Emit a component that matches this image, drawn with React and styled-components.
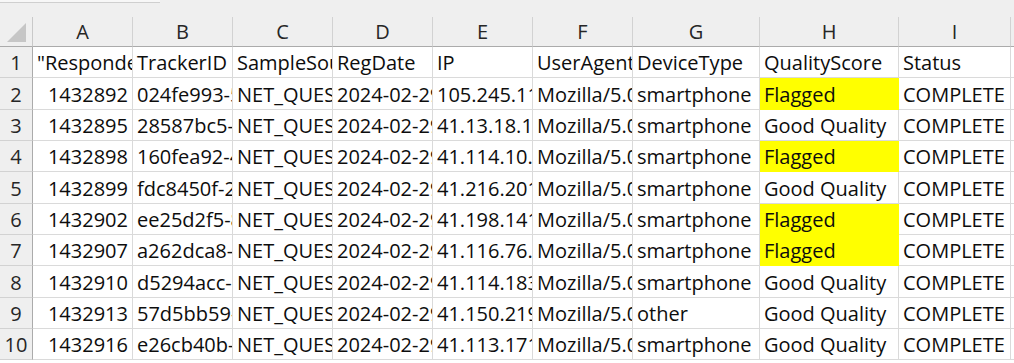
import React from "react";
import styled, { createGlobalStyle } from "styled-components";

const GlobalStyle = createGlobalStyle`
  html, body {
    margin: 0;
    padding: 0;
    background: #ffffff;
  }
`;

const COLS = [100, 100, 100, 100, 100, 100, 127, 139, 112];
const LETTERS = ["A", "B", "C", "D", "E", "F", "G", "H", "I", ""];

const headers = [
  '"RespondentID"',
  "TrackerID",
  "SampleSource",
  "RegDate",
  "IP",
  "UserAgent",
  "DeviceType",
  "QualityScore",
  "Status",
];

const rows = [
  ["1432892", "024fe993-5b1c", "NET_QUESTION", "2024-02-29 08:12", "105.245.113.20", "Mozilla/5.0", "smartphone", "Flagged", "COMPLETE"],
  ["1432895", "28587bc5-9d2e", "NET_QUESTION", "2024-02-29 08:15", "41.13.18.1", "Mozilla/5.0", "smartphone", "Good Quality", "COMPLETE"],
  ["1432898", "160fea92-4a7f", "NET_QUESTION", "2024-02-29 08:19", "41.114.10.88", "Mozilla/5.0", "smartphone", "Flagged", "COMPLETE"],
  ["1432899", "fdc8450f-2c31", "NET_QUESTION", "2024-02-29 08:21", "41.216.201.7", "Mozilla/5.0", "smartphone", "Good Quality", "COMPLETE"],
  ["1432902", "ee25d2f5-81b0", "NET_QUESTION", "2024-02-29 08:26", "41.198.141.52", "Mozilla/5.0", "smartphone", "Flagged", "COMPLETE"],
  ["1432907", "a262dca8-6e44", "NET_QUESTION", "2024-02-29 08:31", "41.116.76.190", "Mozilla/5.0", "smartphone", "Flagged", "COMPLETE"],
  ["1432910", "d5294acc-0f93", "NET_QUESTION", "2024-02-29 08:35", "41.114.183.4", "Mozilla/5.0", "smartphone", "Good Quality", "COMPLETE"],
  ["1432913", "57d5bb59-ba12", "NET_QUESTION", "2024-02-29 08:40", "41.150.219.66", "Mozilla/5.0", "other", "Good Quality", "COMPLETE"],
  ["1432916", "e26cb40b-3d58", "NET_QUESTION", "2024-02-29 08:44", "41.113.171.9", "Mozilla/5.0", "smartphone", "Good Quality", "COMPLETE"],
];

const Page = styled.div`
  width: 1014px;
  height: 363px;
  overflow: hidden;
  background: #ffffff;
  font-family: "Open Sans", "Liberation Sans", sans-serif;
`;

const TopStrip = styled.div`
  height: 17px;
  background: #efefef;
  position: relative;
  &::before {
    content: "";
    position: absolute;
    left: 0;
    top: 0;
    width: 160px;
    height: 2px;
    background: #f7f7f7;
    border-bottom: 1px solid #cfcfcf;
  }
`;

const Grid = styled.div`
  display: grid;
  grid-template-columns: 33px ${COLS.map((c) => `${c}px`).join(" ")} 1fr;
  grid-template-rows: 30px repeat(10, 31.33px);
`;

const Corner = styled.div`
  background: #efefef;
  border-right: 1px solid #c9c9c9;
  border-bottom: 1px solid #ababab;
  position: relative;
  &::after {
    content: "";
    position: absolute;
    right: 6px;
    bottom: 4px;
    width: 0;
    height: 0;
    border-left: 19px solid transparent;
    border-bottom: 19px solid #c6c6c6;
  }
`;

const ColHead = styled.div`
  background: #efefef;
  border-right: 1px solid #d2d2d2;
  border-bottom: 1px solid #ababab;
  display: flex;
  align-items: center;
  justify-content: center;
  font-size: 20px;
  color: #262626;
`;

const RowHead = styled.div`
  background: #efefef;
  border-right: 1px solid #ababab;
  border-bottom: 1px solid #d2d2d2;
  display: flex;
  align-items: flex-end;
  justify-content: center;
  padding-bottom: 1px;
  box-sizing: border-box;
  font-size: 20px;
  color: #262626;
`;

const Cell = styled.div`
  background: ${({ $fill }) => $fill || "#ffffff"};
  border-right: 1px solid ${({ $fill }) => $fill || "#dadada"};
  border-bottom: 1px solid ${({ $fill }) => $fill || "#dadada"};
  box-sizing: border-box;
  overflow: hidden;
  white-space: nowrap;
  display: flex;
  align-items: flex-end;
  justify-content: ${({ $num }) => ($num ? "flex-end" : "flex-start")};
  padding: 0 4px 1px 4px;
  font-size: 20px;
  color: #0d0d0d;
  min-width: 0;
`;

const App = () => {
  return (
    <>
      <GlobalStyle />
      <Page>
        <TopStrip />
        <Grid>
          <Corner />
          {LETTERS.map((l, i) => (
            <ColHead key={i}>{l}</ColHead>
          ))}
          <RowHead>1</RowHead>
          {headers.map((h, i) => (
            <Cell key={i}>{h}</Cell>
          ))}
          <Cell />
          {rows.map((r, ri) => (
            <React.Fragment key={ri}>
              <RowHead>{ri + 2}</RowHead>
              {r.map((v, ci) => (
                <Cell
                  key={ci}
                  $num={ci === 0}
                  $fill={v === "Flagged" ? "#ffff00" : undefined}
                >
                  {v}
                </Cell>
              ))}
              <Cell />
            </React.Fragment>
          ))}
        </Grid>
      </Page>
    </>
  );
};

export default App;
